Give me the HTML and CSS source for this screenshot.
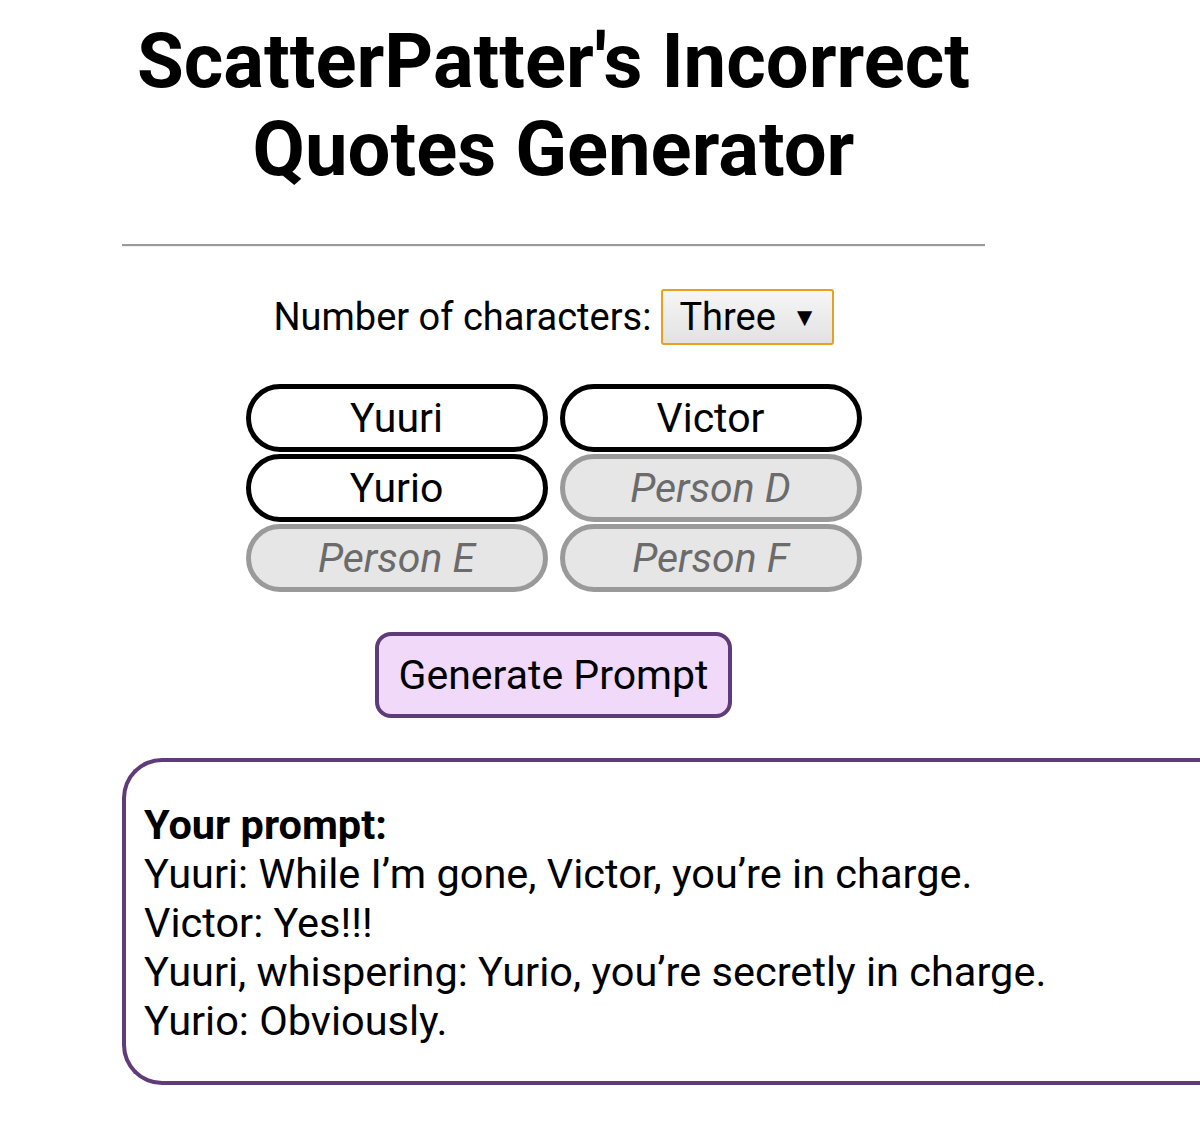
FILE: index.html
```html
<!DOCTYPE html>
<html lang="en">
<head>
    <meta charset="UTF-8">
    <title>ScatterPatter's Incorrect Quotes Generator</title>
    <link rel="stylesheet" href="styles.css">
</head>
<body>
    <div class="page">
        <h1>ScatterPatter's Incorrect Quotes Generator</h1>
        <hr>

        <!-- Character count -->
        <div class="count-row">
            <label for="count">Number of characters:</label>
            <div class="select">
                <span>Three</span>
                <span class="arrow">▼</span>
            </div>
        </div>

        <!-- Character names -->
        <div class="names">
            <input type="text" value="Yuuri" placeholder="Person A">
            <input type="text" value="Victor" placeholder="Person B">
            <input type="text" value="Yurio" placeholder="Person C">
            <input type="text" class="disabled" placeholder="Person D" disabled>
            <input type="text" class="disabled" placeholder="Person E" disabled>
            <input type="text" class="disabled" placeholder="Person F" disabled>
        </div>

        <button class="generate">Generate Prompt</button>
    </div>

    <!-- Output -->
    <div class="prompt-box">
        <p><b>Your prompt:</b><br>
        Yuuri: While I’m gone, Victor, you’re in charge.<br>
        Victor: Yes!!!<br>
        Yuuri, whispering: Yurio, you’re secretly in charge.<br>
        Yurio: Obviously.</p>
    </div>
</body>
</html>
```

FILE: styles.css
```css
/* General Styles */
body {
    font-family: Roboto, "Noto Sans", sans-serif;
    margin: 0;
    padding: 0;
    color: #000;
    background: #fff;
    overflow: hidden;
}

.page {
    width: 863px;
    margin-left: 122px;
    display: flex;
    flex-direction: column;
    align-items: center;
}

h1 {
    font-size: 76px;
    line-height: 88px;
    font-weight: 700;
    text-align: center;
    margin: 17px 0 0;
}

hr {
    width: 100%;
    margin: 51px 0 0;
    border: none;
    border-top: 2px solid #9a9a9a;
    border-bottom: 1px solid #eee;
}

/* Character count */
.count-row {
    display: flex;
    align-items: center;
    gap: 10px;
    margin-top: 42px;
    font-size: 38px;
}

.select {
    display: flex;
    align-items: center;
    gap: 16px;
    height: 52px;
    padding: 0 14px 0 16px;
    border: 2px solid #e8a11e;
    border-radius: 3px;
    background: linear-gradient(#f6f6f6, #e2e2e2);
}

.arrow {
    font-size: 26px;
}

/* Character names */
.names {
    display: grid;
    grid-template-columns: 302px 302px;
    column-gap: 12px;
    row-gap: 2px;
    margin-top: 39px;
}

.names input {
    box-sizing: border-box;
    height: 68px;
    width: 100%;
    border: 5px solid #000;
    border-radius: 34px;
    background: #fff;
    font-family: Roboto, sans-serif;
    font-size: 41px;
    text-align: center;
    color: #000;
    padding: 0;
}

.names input.disabled {
    border-color: #9a9a9a;
    background: #e6e6e6;
}

.names input::placeholder {
    font-style: italic;
    color: #6b6b6b;
}

.generate {
    margin-top: 40px;
    height: 86px;
    padding: 0 20px;
    border: 4px solid #5f3b79;
    border-radius: 16px;
    background: #f0d9f9;
    font-family: Roboto, sans-serif;
    font-size: 41px;
    color: #000;
}

/* Output */
.prompt-box {
    box-sizing: border-box;
    width: 1078px;
    height: 327px;
    margin: 40px 0 0 122px;
    border: 4px solid #5f3b79;
    border-right: none;
    border-radius: 40px 0 0 40px;
    padding: 38px 18px;
}

.prompt-box p {
    margin: 0;
    font-size: 41.5px;
    line-height: 49px;
}
```
